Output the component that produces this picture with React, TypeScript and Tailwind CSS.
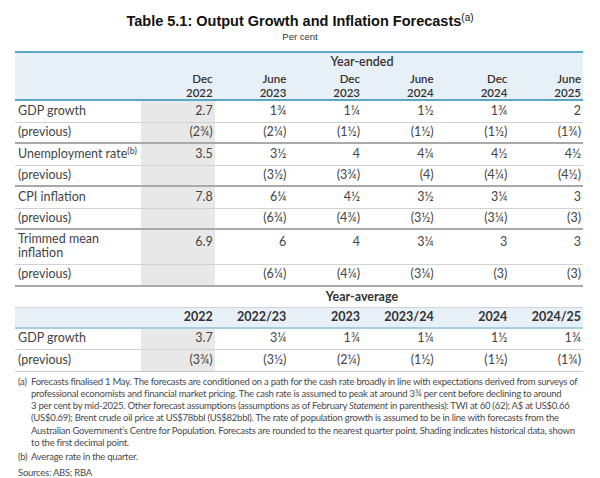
const cols = "grid grid-cols-[126px_repeat(6,minmax(0,1fr))]";

type Row = {
  label: React.ReactNode;
  vals: string[];
  prev: string[];
  tall?: boolean;
};

const rows: Row[] = [
  {
    label: "GDP growth",
    vals: ["2.7", "1¾", "1¼", "1½", "1¾", "2"],
    prev: ["(2¾)", "(2¼)", "(1½)", "(1½)", "(1½)", "(1¾)"],
  },
  {
    label: (
      <>
        Unemployment rate<sup className="text-[9px] top-[-4px]">(b)</sup>
      </>
    ),
    vals: ["3.5", "3½", "4", "4¼", "4½", "4½"],
    prev: ["", "(3½)", "(3¾)", "(4)", "(4¼)", "(4½)"],
  },
  {
    label: "CPI inflation",
    vals: ["7.8", "6¼", "4½", "3½", "3¼", "3"],
    prev: ["", "(6¾)", "(4¾)", "(3½)", "(3¼)", "(3)"],
  },
  {
    label: (
      <>
        Trimmed mean
        <br />
        inflation
      </>
    ),
    vals: ["6.9", "6", "4", "3¼", "3", "3"],
    prev: ["", "(6¼)", "(4¼)", "(3¼)", "(3)", "(3)"],
    tall: true,
  },
];

const Cells = ({ vals, tall }: { vals: string[]; tall?: boolean }) => (
  <>
    {vals.map((v, i) => (
      <div
        key={i}
        className={`flex justify-end pr-[2px] ${tall ? "items-start pt-[3px]" : "items-center"} ${
          i === 0 ? "bg-[#e8e8e8]" : ""
        }`}
      >
        {v}
      </div>
    ))}
  </>
);

const Line = ({ children }: { children: React.ReactNode }) => (
  <div className="whitespace-nowrap">{children}</div>
);

export default function App() {
  return (
    <div className="w-[600px] h-[478px] bg-white overflow-hidden text-[#444] font-['Lato',sans-serif]">
      <div className="pt-[12px] text-center font-['Liberation_Sans',Arial,sans-serif]">
        <h1 className="text-[14.5px] leading-[18px] font-bold text-[#111]">
          Table 5.1: Output Growth and Inflation Forecasts
          <sup className="text-[10px] font-normal top-[-5px]">(a)</sup>
        </h1>
        <p className="text-[9.5px] leading-[12px] mt-[1px] text-[#333]">Per cent</p>
      </div>

      <div className="mx-[15px] mt-[8px] w-[568px] text-[12.5px]">
        {/* year-ended header */}
        <div className="bg-[#e7f0f6] border-t-2 border-b-2 border-[#5ba6c6] h-[50px] font-semibold text-[#333]">
          <div className={cols}>
            <div />
            <div className="col-span-6 text-center leading-[16px] pt-[1px]">Year-ended</div>
          </div>
          <div className={`${cols} text-[11.5px] leading-[14px] mt-[2px]`}>
            <div />
            {[
              ["Dec", "2022"],
              ["June", "2023"],
              ["Dec", "2023"],
              ["June", "2024"],
              ["Dec", "2024"],
              ["June", "2025"],
            ].map(([m, y]) => (
              <div key={m + y} className="text-right pr-[2px]">
                <div>{m}</div>
                <div>{y}</div>
              </div>
            ))}
          </div>
        </div>

        {rows.map((r, idx) => (
          <div key={idx}>
            <div
              className={`${cols} border-b border-[#d2d2d2] ${r.tall ? "h-[35px]" : "h-[21.5px]"}`}
            >
              <div
                className={`pl-[3px] ${r.tall ? "leading-[14px] pt-[2px]" : "flex items-center"}`}
              >
                <span>{r.label}</span>
              </div>
              <Cells vals={r.vals} tall={r.tall} />
            </div>
            <div className={`${cols} border-b-2 border-[#a9a9a9] h-[21.5px]`}>
              <div className="pl-[3px] flex items-center">(previous)</div>
              <Cells vals={r.prev} />
            </div>
          </div>
        ))}

        {/* year-average */}
        <div className={`${cols} h-[20px] font-bold text-[#333]`}>
          <div />
          <div className="col-span-6 text-center leading-[20px]">Year-average</div>
        </div>
        <div
          className={`${cols} h-[22px] bg-[#e7f0f6] border-t border-[#cdd6dc] border-b-2 border-b-[#a6cde0] font-bold text-[#333]`}
        >
          <div />
          {["2022", "2022/23", "2023", "2023/24", "2024", "2024/25"].map((y) => (
            <div key={y} className="flex items-center justify-end pr-[2px]">
              {y}
            </div>
          ))}
        </div>
        <div className={`${cols} border-b border-[#d2d2d2] h-[21.5px]`}>
          <div className="pl-[3px] flex items-center">GDP growth</div>
          <Cells vals={["3.7", "3¼", "1¾", "1¼", "1½", "1¾"]} />
        </div>
        <div className={`${cols} border-b border-[#c8c8c8] h-[21.5px]`}>
          <div className="pl-[3px] flex items-center">(previous)</div>
          <Cells vals={["(3¾)", "(3½)", "(2¼)", "(1½)", "(1½)", "(1¾)"]} />
        </div>

        {/* notes */}
        <div className="text-[9.5px] leading-[12.3px] text-[#4a4a4a] tracking-[-0.25px] mt-[4px]">
          <div className="flex">
            <div className="w-[16px] pl-[3px] shrink-0">(a)</div>
            <div>
              <Line>
                Forecasts finalised 1 May. The forecasts are conditioned on a path for the cash rate broadly in line
                with expectations derived from surveys of
              </Line>
              <Line>
                professional economists and financial market pricing. The cash rate is assumed to peak at around 3¾
                per cent before declining to around
              </Line>
              <Line>
                3 per cent by mid-2025. Other forecast assumptions (assumptions as of February <i>Statement</i> in
                parenthesis): TWI at 60 (62); A$ at US$0.66
              </Line>
              <Line>
                (US$0.69); Brent crude oil price at US$78bbl (US$82bbl). The rate of population growth is assumed to
                be in line with forecasts from the
              </Line>
              <Line>
                Australian Government’s Centre for Population. Forecasts are rounded to the nearest quarter point.
                Shading indicates historical data, shown
              </Line>
              <Line>to the first decimal point.</Line>
            </div>
          </div>
          <div className="flex mt-[2px]">
            <div className="w-[16px] pl-[3px] shrink-0">(b)</div>
            <div>Average rate in the quarter.</div>
          </div>
          <div className="pl-[3px] mt-[3px]">Sources: ABS; RBA</div>
        </div>
      </div>
    </div>
  );
}
